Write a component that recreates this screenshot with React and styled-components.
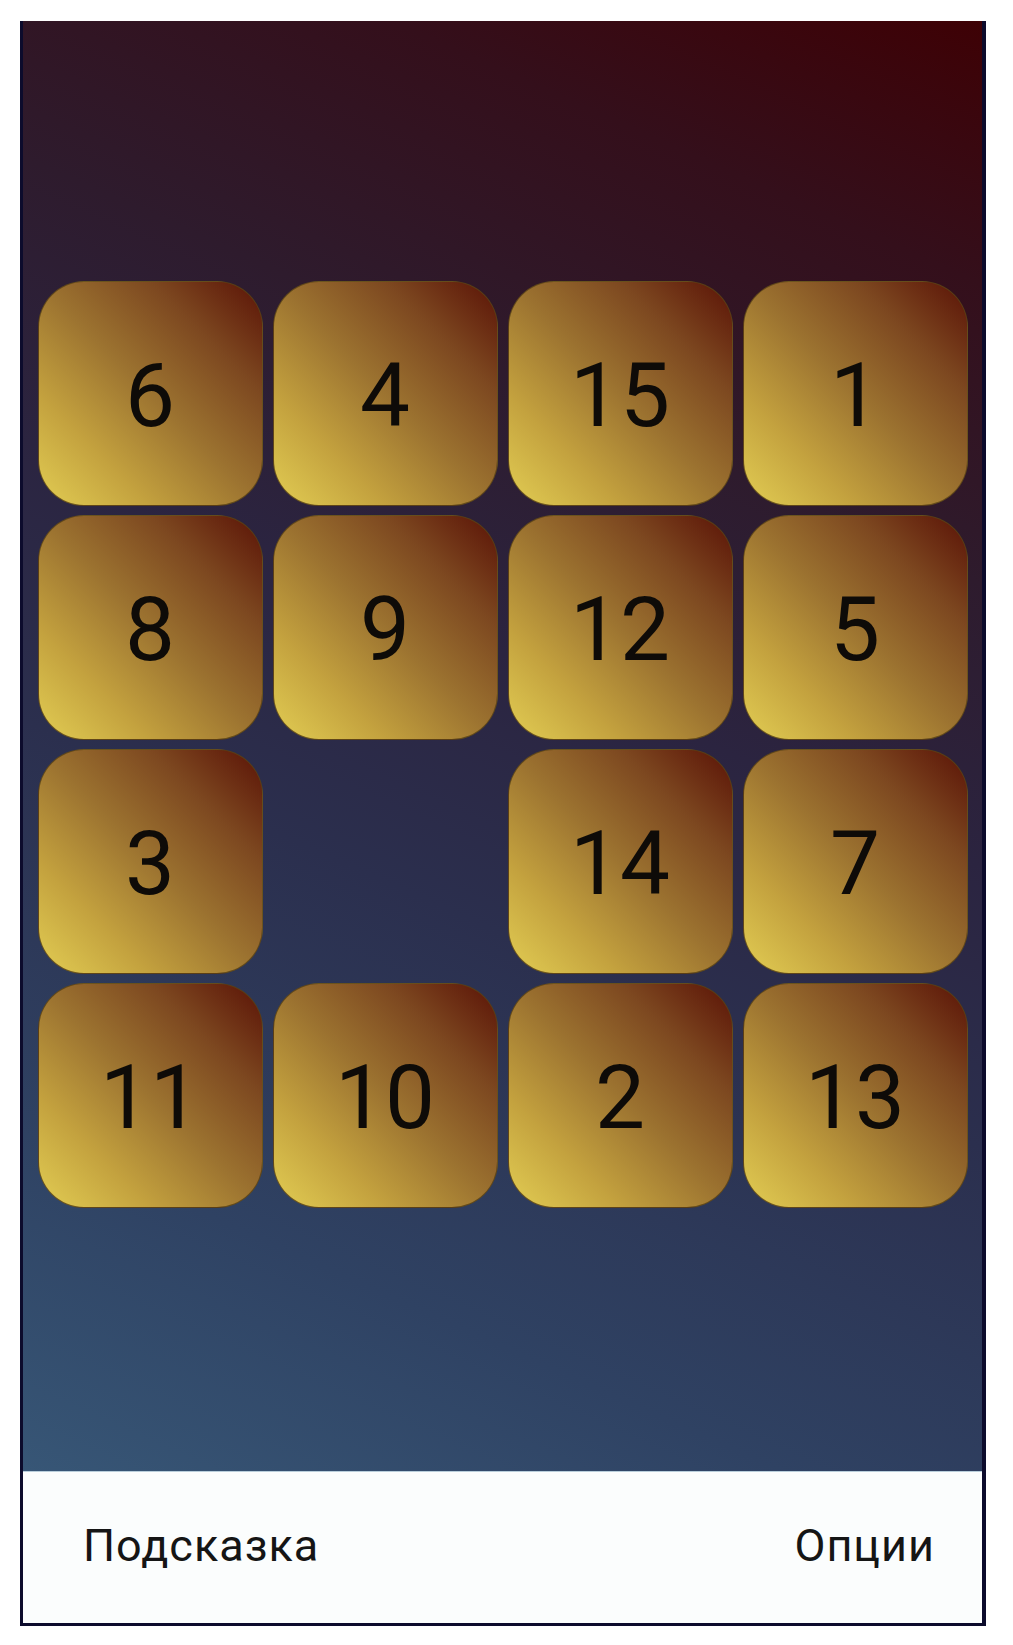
import React from 'react';
import styled, { createGlobalStyle } from 'styled-components';

const GlobalStyle = createGlobalStyle`
  html, body {
    margin: 0;
    padding: 0;
    background: #ffffff;
  }
`;

const tiles = [6, 4, 15, 1, 8, 9, 12, 5, 3, null, 14, 7, 11, 10, 2, 13];

export default function App() {
    return (
        <>
            <GlobalStyle/>
            <Frame>
                <Board>
                    <Grid>
                        {tiles.map((value, i) => (
                            value === null
                                ? <EmptyCell key={i}/>
                                : <Tile key={i}>{value}</Tile>
                        ))}
                    </Grid>
                </Board>
                <BottomBar>
                    <BarButton>Подсказка</BarButton>
                    <BarButton>Опции</BarButton>
                </BottomBar>
            </Frame>
        </>
    );
}

const Frame = styled.div`
  width: 959px;
  margin: 21px 0 0 20px;
  border: 3px solid #0c0b2c;
  border-right-width: 4px;
  border-top: 0;
  display: flex;
  flex-direction: column;
  font-family: Roboto, 'Noto Sans', sans-serif;
`;

const Board = styled.div`
  height: 1450px;
  box-sizing: border-box;
  padding-top: 260px;
  display: flex;
  justify-content: center;
  background: linear-gradient(24deg, #375676 0%, #2f4263 18%, #2b2f4e 40%, #2b2440 55%, #2e1b2d 70%, #340f1b 86%, #3e0105 100%);
`;

const Grid = styled.div`
  display: grid;
  grid-template-columns: repeat(4, 225px);
  grid-auto-rows: 225px;
  column-gap: 10px;
  row-gap: 9px;
  align-content: start;
`;

const Tile = styled.div`
  box-sizing: border-box;
  border-radius: 46px;
  border: 1.5px solid rgba(88, 66, 22, 0.85);
  background: linear-gradient(to top right, #e2cd53 0%, #c3a13e 25%, #9c7330 50%, #7d4820 75%, #5a1206 100%);
  display: flex;
  align-items: center;
  justify-content: center;
  font-size: 89px;
  color: #0e0b08;
  line-height: 1;
  padding-top: 4px;
`;

const EmptyCell = styled.div``;

const BottomBar = styled.div`
  height: 147px;
  background: #fbfdfd;
  border-top: 1px solid #b9cedb;
  display: flex;
  align-items: center;
  justify-content: space-between;
  padding: 0 47px 4px 60px;
`;

const BarButton = styled.span`
  font-size: 45px;
  color: #151515;
  letter-spacing: 1px;
`;
